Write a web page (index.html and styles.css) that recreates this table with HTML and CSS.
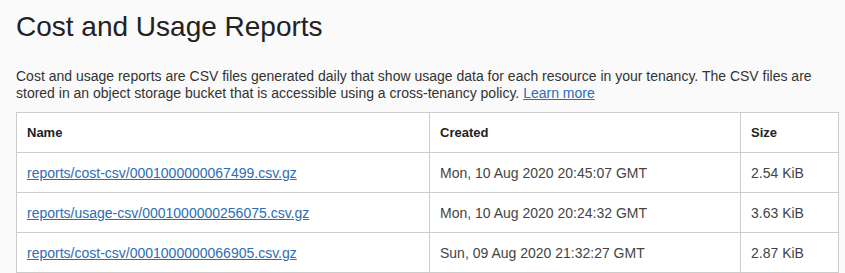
FILE: index.html
```html
<!DOCTYPE html>
<html lang="en">
<head>
  <meta charset="UTF-8" />
  <title>Cost and Usage Reports</title>
  <link rel="stylesheet" href="styles.css">
</head>
<body>

<main>
  <h1>Cost and Usage Reports</h1>
  <p class="intro">
    Cost and usage reports are CSV files generated daily that show usage data for each resource in your tenancy. The CSV files are
    stored in an object storage bucket that is accessible using a cross-tenancy policy. <a href="#">Learn more</a>
  </p>

  <table class="reports">
    <thead>
      <tr>
        <th class="col-name">Name</th>
        <th class="col-created">Created</th>
        <th class="col-size">Size</th>
      </tr>
    </thead>
    <tbody>
      <tr>
        <td><a href="#">reports/cost-csv/0001000000067499.csv.gz</a></td>
        <td>Mon, 10 Aug 2020 20:45:07 GMT</td>
        <td>2.54 KiB</td>
      </tr>
      <tr>
        <td><a href="#">reports/usage-csv/0001000000256075.csv.gz</a></td>
        <td>Mon, 10 Aug 2020 20:24:32 GMT</td>
        <td>3.63 KiB</td>
      </tr>
      <tr>
        <td><a href="#">reports/cost-csv/0001000000066905.csv.gz</a></td>
        <td>Sun, 09 Aug 2020 21:32:27 GMT</td>
        <td>2.87 KiB</td>
      </tr>
    </tbody>
  </table>
</main>

</body>
</html>
```

FILE: styles.css
```css
body {
  font-family: 'Liberation Sans', Arial, sans-serif;
  margin: 0;
  padding: 0;
  background-color: #fafafa;
  color: #333;
}
main {
  padding: 0 6px 0 16px;
}
h1 {
  font-size: 28px;
  font-weight: normal;
  color: #222;
  margin: 0;
  padding-top: 10px;
  line-height: 34px;
}
.intro {
  font-size: 14px;
  line-height: 17px;
  margin: 24px 0 10px 0;
  color: #333;
}
a {
  color: #2a6db5;
}
.reports {
  width: 823px;
  border-collapse: collapse;
  background: #fff;
  font-size: 14px;
  border: 1px solid #ccc;
}
.reports th,
.reports td {
  border: 1px solid #ccc;
  text-align: left;
  height: 39px;
  padding: 0 10px;
}
.reports th {
  font-weight: bold;
  font-size: 13px;
  color: #222;
}
.reports td {
  color: #444;
}
.col-name {
  width: 392px;
}
.col-created {
  width: 290px;
}
```
